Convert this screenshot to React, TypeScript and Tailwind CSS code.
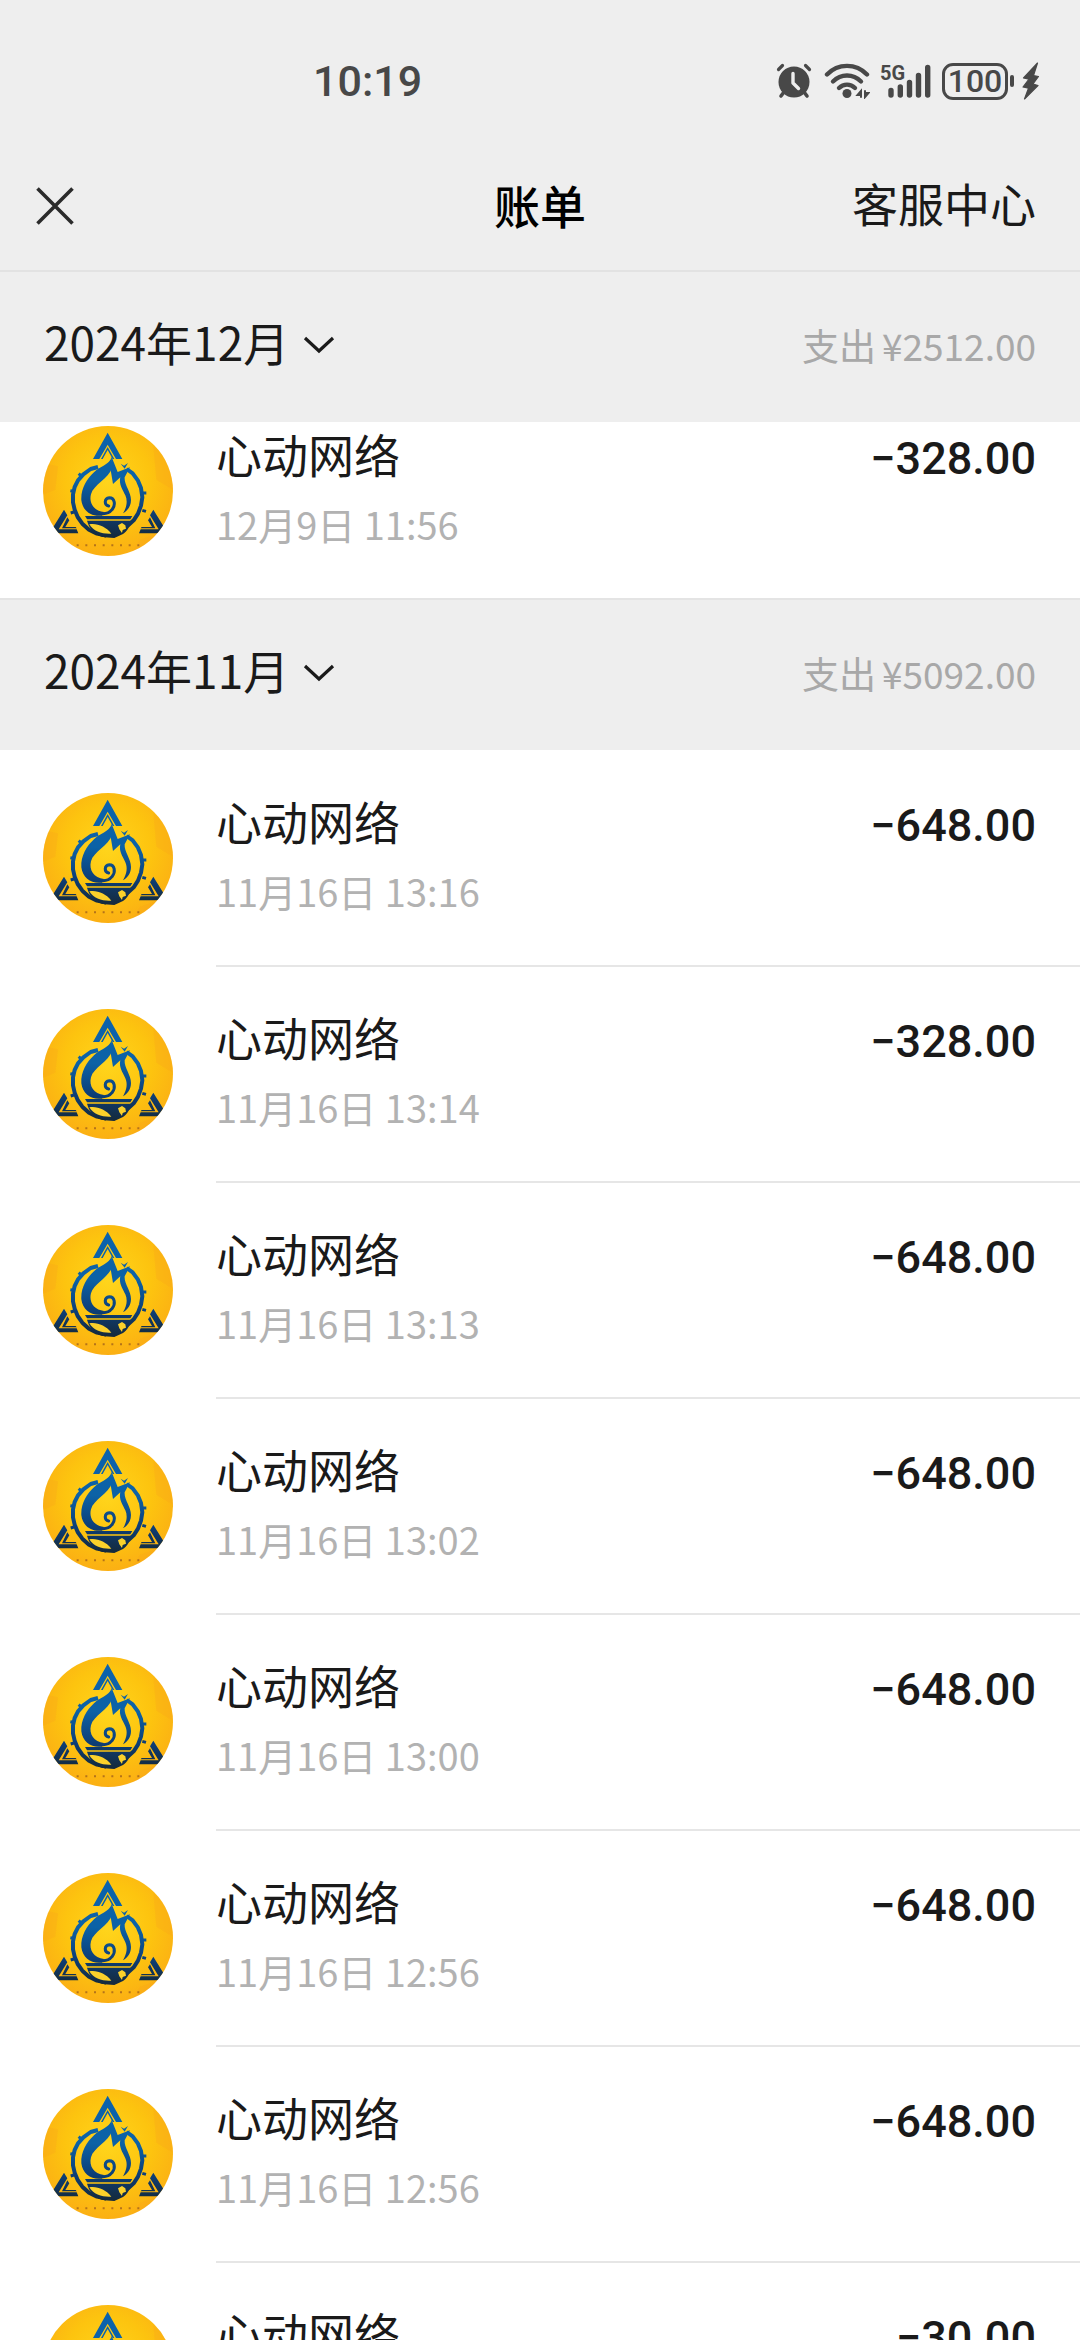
type Bill = { time: string; amount: string };

const december: Bill[] = [{ time: "12月9日 11:56", amount: "−328.00" }];

const november: Bill[] = [
  { time: "11月16日 13:16", amount: "−648.00" },
  { time: "11月16日 13:14", amount: "−328.00" },
  { time: "11月16日 13:13", amount: "−648.00" },
  { time: "11月16日 13:02", amount: "−648.00" },
  { time: "11月16日 13:00", amount: "−648.00" },
  { time: "11月16日 12:56", amount: "−648.00" },
  { time: "11月16日 12:56", amount: "−648.00" },
  { time: "11月16日 12:50", amount: "−30.00" },
];

function AlarmIcon() {
  return (
    <svg width="36" height="36" viewBox="0 0 36 36" fill="none" stroke="#484848" strokeLinecap="round">
      <path d="M2.5 6.5 6.5 2.5M33.5 6.5 29.5 2.5" strokeWidth="3.2" />
      <path d="M8 29 5 33M28 29l3 4" strokeWidth="3.6" />
      <circle cx="18" cy="19" r="15.5" fill="#484848" stroke="none" />
      <path d="M17 10.5v9.5l5.5 5.5" stroke="#eeeeee" strokeWidth="3.4" strokeLinejoin="round" />
    </svg>
  );
}

function WifiIcon() {
  return (
    <svg width="46" height="36" viewBox="0 0 46 36" fill="none" stroke="#484848" strokeWidth="4.4" strokeLinecap="round">
      <path d="M3 11.5C14 0 32 0 43 11.5" />
      <path d="M9 18.5c8-8 20-8 28 0" />
      <path d="M15 25c4.5-4.5 11.5-4.5 16 0" />
      <circle cx="23" cy="30.5" r="4.5" fill="#484848" stroke="none" />
      <path d="M37 28v6M37 28l-3.5 4H37zM41 34v-6M41 34l3.5-4H41z" strokeWidth="2" />
    </svg>
  );
}

function SignalIcon() {
  return (
    <div className="relative h-9 w-[52px]">
      <svg width="52" height="36" viewBox="0 0 52 36" stroke="#484848" strokeWidth="5.4" strokeLinecap="round">
        <path d="M11 27.5v4.5M20.3 24v8M29.5 19.5v12.5M38.5 12.5v19.5M47.7 4.5v27.5" />
      </svg>
      <span className="absolute top-0 left-0 font-['Roboto'] text-[20px] leading-[20px] font-bold">5G</span>
    </div>
  );
}

function BoltIcon() {
  return (
    <svg width="18" height="38" viewBox="0 0 18 38" fill="#484848" stroke="#484848" strokeWidth="1.2" strokeLinejoin="round">
      <path d="M15.5 1 1.5 16l5.5 1.2L1 25l5.5 1.2L2.5 37 16 23.5l-5-1.5 5.5-7.5-5-1z" />
    </svg>
  );
}

function StatusBar() {
  return (
    <div className="flex h-[142px] items-center justify-between pt-5 pr-10 pl-[313px] font-['Roboto'] text-[#484848]">
      <span className="text-[43px] leading-[54px] font-medium">10:19</span>
      <div className="flex items-center">
        <AlarmIcon />
        <div className="ml-3">
          <WifiIcon />
        </div>
        <div className="ml-2.5">
          <SignalIcon />
        </div>
        <span className="ml-2.5 flex h-[37px] w-[66px] items-center justify-center rounded-[11px] border-3 border-[#484848] text-[32px] font-medium">
          100
        </span>
        <span className="ml-0.5 h-3 w-1 rounded-xs bg-[#484848]" />
        <div className="ml-2">
          <BoltIcon />
        </div>
      </div>
    </div>
  );
}

function NavBar() {
  return (
    <header className="grid h-[130px] grid-cols-3 items-center border-b-2 border-[#e2e2e2] px-9 text-[46px] leading-[60px]">
      <button aria-label="关闭" className="justify-self-start">
        <svg width="38" height="38" viewBox="0 0 38 38" stroke="#2b2b2b" strokeWidth="3.6">
          <path d="M1.5 1.5l35 35M36.5 1.5l-35 35" />
        </svg>
      </button>
      <h1 className="justify-self-center pb-1 font-medium text-black">账单</h1>
      <a href="#service" className="mr-2 justify-self-end pb-2 whitespace-nowrap">
        客服中心
      </a>
    </header>
  );
}

// Flame emblem over an oil bowl, framed by three chevrons
function Emblem() {
  return (
    <svg className="size-[130px] shrink-0 rounded-full" viewBox="39 39 390 390" aria-hidden="true">
      <defs>
        <radialGradient id="gold" cx="0.5" cy="0.42" r="0.6">
          <stop offset="0" stopColor="#ffd51c" />
          <stop offset="0.55" stopColor="#fdc40f" />
          <stop offset="1" stopColor="#fbae14" />
        </radialGradient>
        <linearGradient id="ink" gradientUnits="userSpaceOnUse" x1="0" y1="60" x2="0" y2="375">
          <stop offset="0" stopColor="#0b62ad" />
          <stop offset="0.45" stopColor="#0c62a6" />
          <stop offset="0.75" stopColor="#0d3e77" />
          <stop offset="1" stopColor="#15293a" />
        </linearGradient>
      </defs>
      <rect x="39" y="39" width="390" height="390" fill="url(#gold)" />
      <path d="M39 150l45 10-8 70-37 15zM370 100l59 40v90l-50-30zM330 380l60-20-30 69h-60z" fill="#f9a51a" opacity="0.3" />
      <g fill="url(#ink)">
        <path d="M233 59l44 79h-19l-25-43-25 43h-19z" />
        <path d="M233 102l20 36h-5l-15-27-15 27h-5z" />
        {/* left tongue of the flame down to the bowl */}
        <path d="M245 132C238 156 208 160 192 178C170 198 152 228 154 262C158 294 184 312 216 308L222 297C192 294 176 270 183 244C190 216 236 196 246 166Z" />
        <path d="M245 132l18 45 37-14-16 30c-2 22 19 44 19 68 0 18-10 32-24 40 12-20 14-38 7-54-9-20-20-34-15-54l-22 20-8-48zM272 152l10 6 12-8-10 17z" />
        <path d="M165 309h142l-6 10H171z" />
        <path d="M171 323h130c0 16-8 29-22 40l-26 12-30-2c-28-6-44-22-52-50z" />
        <path d="M102 290l10 17-26 42h54l5 12H68l-6-6zM112 313l6 9-12 20h31l3 4H96z" />
        <path d="M370 290l-10 17 26 42h-54l-5 12h77l6-6zM360 313l-6 9 12 20h-31l-3 4h44z" />
      </g>
      <g fill="none" stroke="url(#ink)">
        <path
          d="M204 162l-22 6-22 16-16 18-10 20-5 22v24l5 22 9 22 14 20 20 18 24 12 28 6M290 168l18 13 16 22 9 22 4 28-4 25-9 24-13 20-18 16-22 12"
          strokeWidth="12"
          strokeLinejoin="bevel"
        />
        <path d="M146 182l10 9M121 233l12 2M122 300l10-3M349 240h-10M348 295l-11-3" strokeWidth="9" />
        {/* curl */}
        <path d="M236 279C222 276 222 256 238 254C254 254 258 276 246 290C238 300 222 304 206 301" strokeWidth="9" strokeLinecap="round" />
      </g>
      <path d="M178 334c20-5 50 6 66 28-24 2-54-6-66-28z" fill="#fbd12b" />
      <path d="M264 337l12-7 10 7 2 10-10 4-2 9-8-11z" fill="#fbd12b" />
      <path d="M140 397h192" stroke="#b4731a" strokeWidth="6" strokeDasharray="6 20" />
    </svg>
  );
}

function MonthBar({ month, total }: { month: string; total: string }) {
  return (
    <div className="flex h-[150px] items-baseline justify-between bg-[#eeeeee] px-11 pt-[37px]">
      <button className="flex items-center gap-3.5 text-[46px] leading-[64px]">
        {month}
        <svg className="mt-2" width="32" height="18" viewBox="0 0 32 18" fill="none" stroke="#1a1a1a" strokeWidth="3.2">
          <path d="M2 2l14 13L30 2" />
        </svg>
      </button>
      <p className="flex gap-1.5 text-[37px] leading-[52px] text-[#a8a8a8]">
        <span>支出</span>
        <span>¥{total}</span>
      </p>
    </div>
  );
}

function BillRow({ bill, divider }: { bill: Bill; divider: boolean }) {
  return (
    <li className="flex gap-[43px] pl-[43px]">
      <Emblem />
      <div
        className={
          divider
            ? "mb-[42px] flex h-[174px] flex-1 justify-between border-b-2 border-[#e6e6e6] pr-11"
            : "flex h-[172px] flex-1 justify-between pr-11"
        }
      >
        <div>
          <p className="text-[46px] leading-[54px]">心动网络</p>
          <p className="mt-4 text-[38px] leading-[56px] text-[#b2b2b2]">{bill.time}</p>
        </div>
        <p className="font-['Roboto'] text-[45px] leading-[66px] font-medium">{bill.amount}</p>
      </div>
    </li>
  );
}

export default function App() {
  return (
    <div className="flex h-screen flex-col overflow-hidden bg-white font-['Noto_Sans_CJK_SC',sans-serif] text-[#1a1a1a]">
      <div className="shrink-0 bg-[#eeeeee]">
        <StatusBar />
        <NavBar />
      </div>
      <main className="min-h-0 flex-1 overflow-hidden">
        <section>
          <MonthBar month="2024年12月" total="2512.00" />
          <ul className="pt-1">
            {december.map((bill) => (
              <BillRow key={bill.time} bill={bill} divider={false} />
            ))}
          </ul>
        </section>
        <section className="border-t-2 border-[#e4e4e4]">
          <MonthBar month="2024年11月" total="5092.00" />
          <ul className="pt-[43px]">
            {november.map((bill, i) => (
              <BillRow key={i} bill={bill} divider />
            ))}
          </ul>
        </section>
      </main>
    </div>
  );
}
